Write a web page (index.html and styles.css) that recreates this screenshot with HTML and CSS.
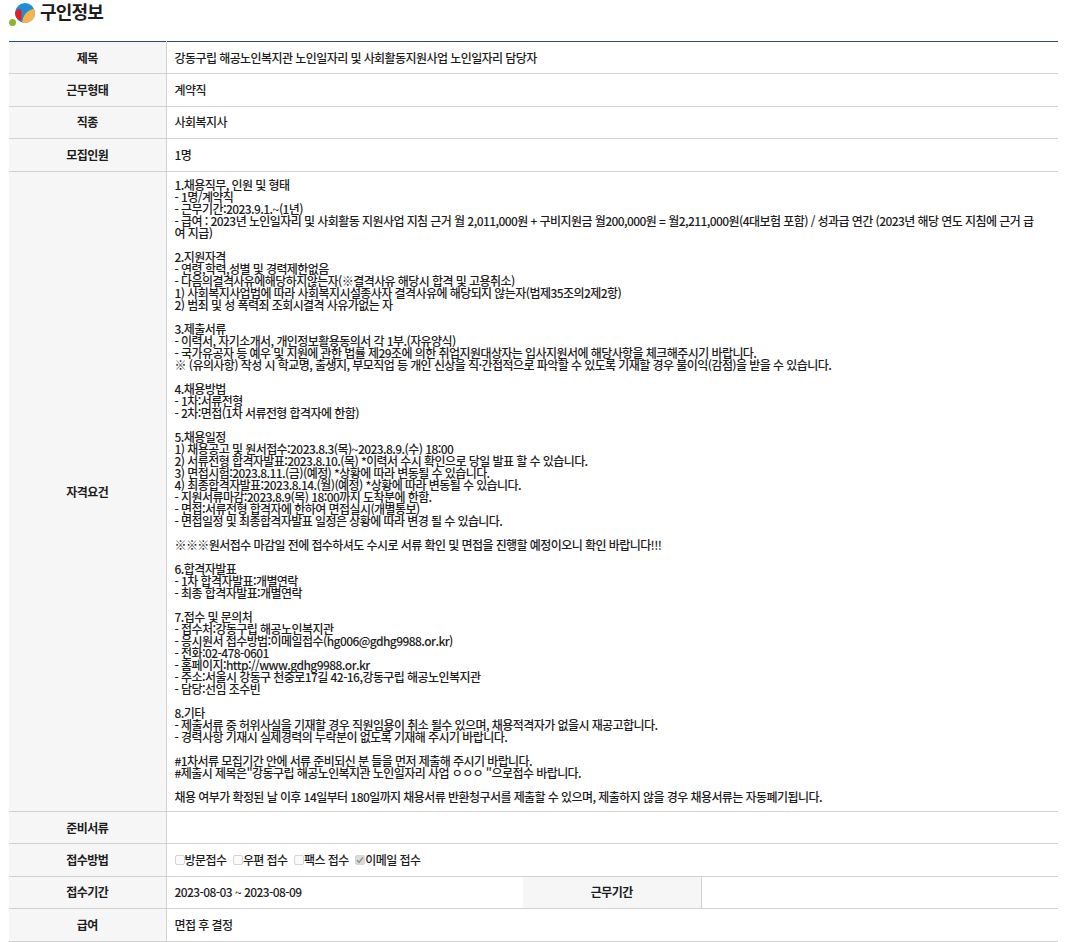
FILE: index.html
```html
<!DOCTYPE html>
<html lang="ko">
<head>
<meta charset="utf-8">
<title>구인정보</title>
<link rel="stylesheet" href="styles.css">
</head>
<body>
<header class="head">
<svg class="logo" width="26" height="26" viewBox="0 0 26 26"><defs><clipPath id="disc"><circle cx="16" cy="13" r="10"/></clipPath></defs><circle cx="3.5" cy="22.5" r="3.500" fill="#8fb52c"/><circle cx="16" cy="13" r="10" fill="#1e8fd5"/><g clip-path="url(#disc)"><path d="M13 24C13.500 16 17 10 27 8L28 25z" fill="#fbb24b"/><path d="M11.500 9C7 9 5 13 6 15c1 3 3 5 6 6 1-4 1-9-.5-12z" fill="#e01f26"/></g></svg>
<h1 class="title">구인정보</h1>
</header>
<table class="info">
<colgroup><col class="c1"><col class="c2"><col class="c3"><col></colgroup>
<tr class="r"><th>제목</th><td colspan="3">강동구립 해공노인복지관 노인일자리 및 사회활동지원사업 노인일자리 담당자</td></tr>
<tr class="r"><th>근무형태</th><td colspan="3">계약직</td></tr>
<tr class="r"><th>직종</th><td colspan="3">사회복지사</td></tr>
<tr class="r"><th>모집인원</th><td colspan="3">1명</td></tr>
<tr><th>자격요건</th><td colspan="3" class="long">1.채용직무, 인원 및 형태
- 1명/계약직
- 근무기간:2023.9.1.~(1년)
- 급여 : 2023년 노인일자리 및 사회활동 지원사업 지침 근거 월 2,011,000원 + 구비지원금 월200,000원 = 월2,211,000원(4대보험 포함) / 성과급 연간 (2023년 해당 연도 지침에 근거 급여 지급)

2.지원자격
- 연령,학력,성별 및 경력제한없음
- 다음의결격사유에해당하지않는자(※결격사유 해당시 합격 및 고용취소)
1) 사회복지사업법에 따라 사회복지시설종사자 결격사유에 해당되지 않는자(법제35조의2제2항)
2) 범죄 및 성 폭력죄 조회시결격 사유가없는 자

3.제출서류
- 이력서, 자기소개서, 개인정보활용동의서 각 1부.(자유양식)
- 국가유공자 등 예우 및 지원에 관한 법률 제29조에 의한 취업지원대상자는 입사지원서에 해당사항을 체크해주시기 바랍니다.
※ (유의사항) 작성 시 학교명, 출생지, 부모직업 등 개인 신상을 직·간접적으로 파악할 수 있도록 기재할 경우 불이익(감점)을 받을 수 있습니다.

4.채용방법
- 1차:서류전형
- 2차:면접(1차 서류전형 합격자에 한함)

5.채용일정
1) 채용공고 및 원서접수:2023.8.3(목)~2023.8.9.(수) 18:00
2) 서류전형 합격자발표:2023.8.10.(목) *이력서 수시 확인으로 당일 발표 할 수 있습니다.
3) 면접시험:2023.8.11.(금)(예정) *상황에 따라 변동될 수 있습니다.
4) 최종합격자발표:2023.8.14.(월)(예정) *상황에 따라 변동될 수 있습니다.
- 지원서류마감:2023.8.9(목) 18:00까지 도착분에 한함.
- 면접:서류전형 합격자에 한하여 면접실시(개별통보)
- 면접일정 및 최종합격자발표 일정은 상황에 따라 변경 될 수 있습니다.

※※※원서접수 마감일 전에 접수하셔도 수시로 서류 확인 및 면접을 진행할 예정이오니 확인 바랍니다!!!

6.합격자발표
- 1차 합격자발표:개별연락
- 최종 합격자발표:개별연락

7.접수 및 문의처
- 접수처:강동구립 해공노인복지관
- 응시원서 접수방법:이메일접수(hg006@gdhg9988.or.kr)
- 전화:02-478-0601
- 홈페이지:http://www.gdhg9988.or.kr
- 주소:서울시 강동구 천중로17길 42-16,강동구립 해공노인복지관
- 담당:선임 조수빈

8.기타
- 제출서류 중 허위사실을 기재할 경우 직원임용이 취소 될수 있으며, 채용적격자가 없을시 재공고합니다.
- 경력사항 기재시 실제경력의 누락분이 없도록 기재해 주시기 바랍니다.

#1차서류 모집기간 안에 서류 준비되신 분 들을 먼저 제출해 주시기 바랍니다.
#제출시 제목은"강동구립 해공노인복지관 노인일자리 사업 ㅇㅇㅇ "으로접수 바랍니다.

채용 여부가 확정된 날 이후 14일부터 180일까지 채용서류 반환청구서를 제출할 수 있으며, 제출하지 않을 경우 채용서류는 자동폐기됩니다.</td></tr>
<tr class="r"><th>준비서류</th><td colspan="3"></td></tr>
<tr class="r"><th>접수방법</th><td colspan="3"><span class="opt"><span class="box"></span>방문접수</span><span class="opt"><span class="box"></span>우편 접수</span><span class="opt"><span class="box"></span>팩스 접수</span><span class="opt"><span class="box on"><svg width="10" height="10" viewBox="0 0 10 10"><path d="M2 5.200l2 2.200 4-5" fill="none" stroke="#8f8f8f" stroke-width="1.500"/></svg></span>이메일 접수</span></td></tr>
<tr class="r"><th>접수기간</th><td>2023-08-03 ~ 2023-08-09</td><th>근무기간</th><td></td></tr>
<tr class="r"><th>급여</th><td colspan="3">면접 후 결정</td></tr>
</table>
</body>
</html>
```
FILE: styles.css
```css
* { box-sizing: border-box; }
html, body { margin: 0; background: #fff; }
body {
  padding: 0 26px 0 9px;
  color: #1c1c1c;
  font-family: "Noto Sans CJK KR", "Noto Sans", sans-serif;
  font-size: 12px;
  letter-spacing: -0.57px;
  font-weight: 500;
}
.head { display: flex; align-items: flex-start; height: 41px; }
.logo { flex: none; }
.title { margin: 0 0 0 5px; font-size: 18px; line-height: 22px; font-weight: 700; letter-spacing: -0.8px; color: #1c1c1c; }
.info {
  width: 1049px;
  table-layout: fixed;
  border-collapse: collapse;
  border-top: 1px solid #2b4a78;
}
.c1 { width: 157px; }
.c2 { width: 357px; }
.c3 { width: 178px; }
.info th, .info td { border-bottom: 1px solid #d2d2d2; padding: 0 8px; }
.info th { background: #f6f6f6; border-right: 1px solid #d2d2d2; font-weight: 700; text-align: center; }
.r { height: 32.400px; }
.info .r th, .info .r td { padding-bottom: 1px; }
.info .long { white-space: pre-wrap; line-height: 12px; padding: 7px 20px 8.400px 8px; overflow-wrap: anywhere; }
.opt { display: inline-flex; align-items: center; margin-right: 6.500px; }
.box { width: 10px; height: 10px; border: 1px solid #d4d4d4; border-radius: 2px; background: #fafafa; display: inline-flex; }
.box.on { background: #dcdcdc; border-color: #d4d4d4; }
.box svg { margin: -1px; flex: none; }
```
